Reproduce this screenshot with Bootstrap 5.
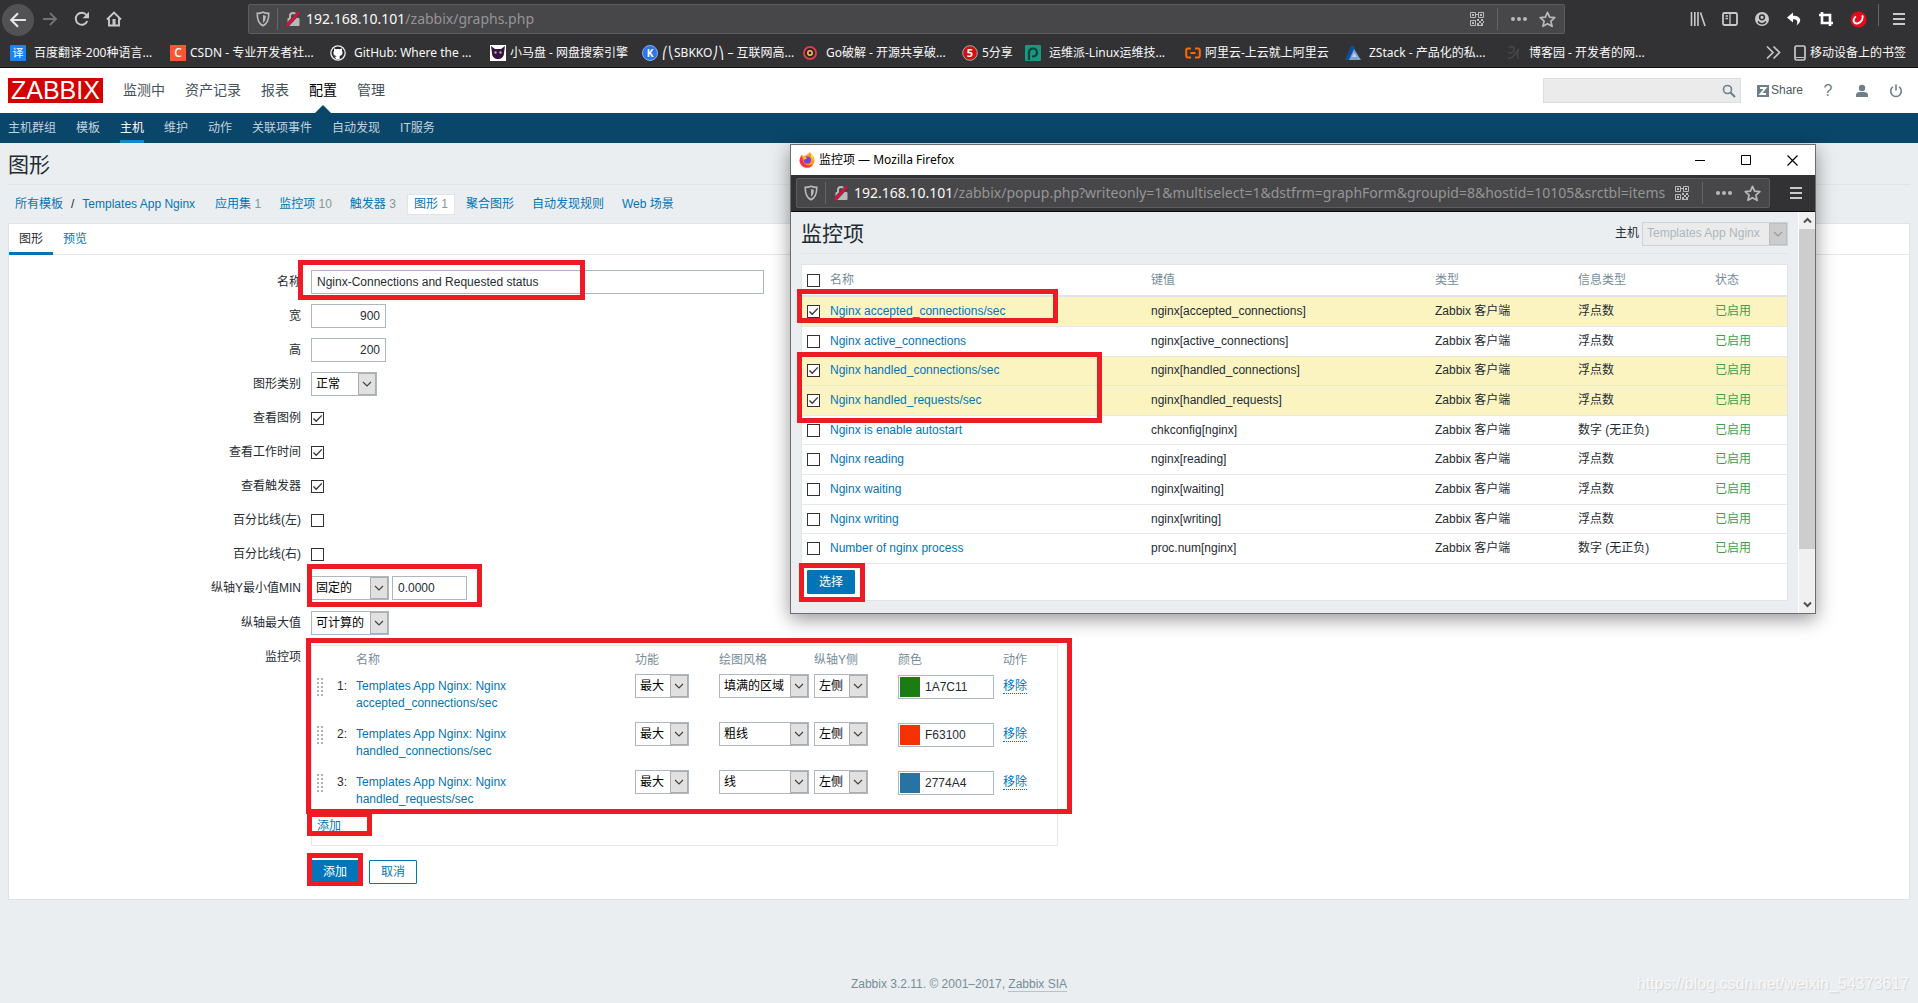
<!DOCTYPE html>
<html lang="zh-CN">
<head>
<meta charset="utf-8">
<meta name="viewport" content="width=device-width, initial-scale=1">
<title>图形</title>
<link href="https://cdn.jsdelivr.net/npm/bootstrap@5.3.0/dist/css/bootstrap.min.css" rel="stylesheet">
<style>
:root{--ui:"Noto Sans","Noto Sans CJK SC",sans-serif;--zbx:"Liberation Sans","Noto Sans CJK SC",sans-serif;--link:#0275b8;--line:#dfe4e7;--ink:#1f2c33}
body{font:12px/17px var(--zbx);color:var(--ink);background:#ebeef0;min-height:100vh}
a{color:var(--link);text-decoration:none}
svg{display:block;flex:none}
button{font-family:inherit}
/* browser chrome */
.chrome-top{background:#323234;border-bottom:1px solid #0c0c0d;color:#f9f9fa;font-family:var(--ui)}
.toolrow{height:38px;padding:4px 3px 0 2px}
.tool{background:none;border:0;padding:0;width:32px;height:30px;display:flex;align-items:center;justify-content:center;color:#c9c9ca;flex:none}
.tool.back{border-radius:50%;background:#525254;height:32px;color:#e6e6e7}
.tool.bright{color:#fff}
.urlbar{background:#474749;border:1px solid #5c5c5e;border-radius:2px;height:30px;color:#b9b9ba;min-width:0;padding:0 4px 0 6px}
.urlbar.main{margin-left:118px;margin-right:117px}
.urltext{font:14px/20px var(--ui);color:#959596;white-space:nowrap;overflow:hidden;min-width:0;margin-left:5px}
.urltext b{font-weight:400;color:#f9f9fa}
.vline{width:1px;height:22px;background:#65656b;flex:none}
.vline.lead-in{margin:0 7px 0 6px}
.bookrow{height:29px;padding-left:10px;padding-right:12px}
.bm{width:160px;color:#f9f9fa;font:12px/17px var(--ui);white-space:nowrap;gap:4px}
.bm.wide-gap{gap:8px}
.bm.mid{width:152px}
.bm.short{width:63px}
/* zabbix header */
.zhead{background:#fff;height:45px;padding:0 8px}
.zlogo{background:#d40000;color:#fff;font-size:25px;line-height:25px;height:25px;padding:0 3px}
.zlogo:hover{color:#fff}
.topmenu{gap:20px;margin-left:20px}
.topmenu a{font-size:14px;line-height:45px;color:#445259;position:relative}
.topmenu a.on{color:#000}
.topmenu a.on::after{content:"";position:absolute;left:50%;bottom:0;margin-left:-8px;border:8px solid transparent;border-top:0;border-bottom-color:#0a466a}
.submenu{background:#0a466a;height:30px;padding:0 8px;gap:20px}
.submenu a{color:#c3d2dc;line-height:30px;height:30px}
.submenu a.on{color:#fff;border-bottom:3px solid #1487cd}
.zsearch{width:198px;height:25px;background:#ebebeb;border:1px solid #dcdfe1}
.zsearch input{background:none;border:0;min-width:0;outline:0}
.share,.share:hover{color:#4c5a61;gap:2px;margin-right:8px}
.hicon{width:34px;height:25px;color:#6c7f8a}
.hicon:last-child{margin-right:-3px}
/* page */
h1{font-size:21px;font-weight:400;line-height:39px;margin:0;color:var(--ink)}
.titlebar{border-bottom:1px solid var(--line);min-height:42px;padding-top:2px}
.crumbs{padding:8px 7px;gap:18px;height:38px}
.crumbs .path{margin-right:2px}
.crumbs span{color:#87949b}
.crumbs .cur{background:#fff;border:1px solid var(--line);padding:1px 6px;margin:0 -7px}
.panel{background:#fff;border:1px solid var(--line)}
.tabs{border-bottom:1px solid #e5e8ea;height:31px}
.tabs a{padding:0 10px;line-height:31px;height:31px}
.tabs a.on{color:var(--ink);border-bottom:3px solid var(--link)}
.zform{padding:15px 0}
.frow{display:flex;min-height:24px;margin-bottom:10px}
.frow.tall{min-height:25px}
.frow.last{margin:14px 0 0}
.frow>label,.frow>.lab{width:292px;margin-right:10px;text-align:right;line-height:24px;flex:none}
.fctl{display:flex;align-items:center;position:relative;gap:3px;height:24px}
.tbox{border:1px solid #abb8bf;height:24px;padding:0 5px;color:var(--ink);background:#fff;border-radius:0}
.num{width:75px}
.long{width:453px}
.tsel{appearance:none;border:1px solid #abb8bf;border-radius:0;height:24px;padding:0 18px 0 4px;color:#000;background:#fff url("data:image/svg+xml,%3Csvg xmlns='http://www.w3.org/2000/svg' width='18' height='22'%3E%3Crect x='.5' y='.5' width='17' height='21' fill='%23e1e1e1' stroke='%23adadad'/%3E%3Cpath d='M5 9l4 4 4-4' fill='none' stroke='%23444' stroke-width='1.2'/%3E%3C/svg%3E") no-repeat right 0 center}
.tsel:disabled{opacity:1;color:#acb8be;border-color:#c9d4da;background-color:#ebebeb;background-image:url("data:image/svg+xml,%3Csvg xmlns='http://www.w3.org/2000/svg' width='18' height='22'%3E%3Crect x='.5' y='.5' width='17' height='21' fill='%23ccc' stroke='%23bfbfbf'/%3E%3Cpath d='M5 9l4 4 4-4' fill='none' stroke='%23999' stroke-width='1.2'/%3E%3C/svg%3E")}
.w54{width:54px}.w66{width:66px}.w78{width:78px}.w90{width:90px}.w146{width:146px}
.tick{appearance:none;width:13px;height:13px;border:1px solid #333;background:#fff;margin:0;display:block;flex:none}
.tick:checked{background:#fff url("data:image/svg+xml,%3Csvg xmlns='http://www.w3.org/2000/svg' width='11' height='11'%3E%3Cpath d='M1.5 5.5l2.7 2.8L9.8 2.4' fill='none' stroke='%23333' stroke-width='1.3'/%3E%3C/svg%3E") no-repeat center}
.items{border:1px solid #e5e8ea;width:747px;height:201px;padding:6px 5px 0}
.items table{table-layout:fixed;width:100%}
.items th{font-weight:400;color:#768d99;padding:0 0 5px;line-height:17px}
.items td{height:48px;vertical-align:top;padding:4px 0}
.items td.c{padding:0}
.items td.nm{padding-right:60px}
.grip{width:6px;height:18px;background:repeating-linear-gradient(#fff0 0 2px,#fff 2px 4px),linear-gradient(90deg,#a9b3b9 2px,#fff 2px 4px,#a9b3b9 4px)}
.colr{border:1px solid #abb8bf;width:96px;height:24px;margin-top:1px;padding:1px}
.colr input{border:0;width:70px;padding:0 5px;color:var(--ink);outline:0}
.swatch{width:20px;height:20px;border:0;padding:0}
.act{border-bottom:1px dotted var(--link)}
.zbtn{background:var(--link);border:1px solid var(--link);color:#fff;height:24px;width:48px;padding:0;font-size:12px;line-height:22px;border-radius:1px}
.zbtn.alt{background:#fff;color:var(--link);margin-left:7px}
.zbtn.pick{margin:6px 5px}
.foot{color:#768d99;padding-bottom:10px}
.foot a{color:#768d99;border-bottom:1px solid #b8c2c8}
.wmark{position:absolute;right:9px;bottom:8px;font-size:16px;line-height:22px;color:#f7f8f9;text-shadow:1px 1px 1px #cdd1d3}
/* red marker frames lying over the content */
.frame{position:absolute;border:5px solid #ed1c24;pointer-events:none;z-index:2}
.f-name{left:-13px;top:-10px;width:287px;height:40px}
.f-min{left:-4px;top:-12px;width:175px;height:43px}
.f-items{left:-5px;top:-7px;width:766px;height:176px}
.f-add{left:-4px;top:167px;width:65px;height:24px}
.f-submit{left:-4px;top:-7px;width:56px;height:33px}
.f-row1{left:-5px;top:24px;width:261px;height:34px}
.f-row2{left:-5px;top:87px;width:305px;height:71px}
.f-pick{left:-3px;top:298px;width:66px;height:39px}
/* popup window */
.popwin{position:absolute;left:790px;top:144px;width:1026px;height:470px;border:1px solid #6b6d6f;background:#ebeef0;box-shadow:0 5px 18px rgba(0,0,0,.42);z-index:5}
.wtitle{height:30px;background:#fff;color:#000;font:12px/30px var(--ui);padding-left:8px}
.wtitle button{width:46px;height:30px;border:0;background:none;padding:0;display:flex;align-items:center;justify-content:center}
.pchrome{background:#323234;border-bottom:1px solid #0c0c0d;height:37px;padding:3px 3px 3px 5px;color:#f9f9fa}
.pchrome .tool{margin-left:10px}
.vline.mid-bar{margin:0 9px 0 12px}
.pview{height:401px}
.pbody{padding:0 10px;min-width:0}
.hostpick{gap:3px}
.ptab{background:#fff;border:1px solid var(--line);margin-top:10px;height:337px;position:relative}
.ptab table{width:100%;table-layout:fixed;height:299px}
.ptab th{font-weight:400;color:#768d99;padding:0;height:31px;border-bottom:2px solid var(--line)}
.ptab td{padding:0;border-bottom:1px solid #e5e8ea}
.ptab td:first-child,.ptab th:first-child{padding-left:5px}
.ptab tr.sel{background:#fbf4c1}
.ok,.ok:hover{color:#429e47}
.sbar{width:17px;flex:none;background:#f0f0f0;border-left:1px solid #fff;color:#505050}
.thumb{background:#cdcdcd;height:320px}
</style>
<script src="https://cdn.jsdelivr.net/npm/bootstrap@5.3.0/dist/js/bootstrap.bundle.min.js"></script>
</head>
<body class="d-flex flex-column position-relative">
<svg width="0" height="0" class="position-absolute" aria-hidden="true">
<symbol id="shield" viewBox="0 0 16 16"><path d="M8 1.200c2 .9 4 1.200 5.800 1.200 0 5.300-.6 9.800-5.800 12.400C2.800 12.200 2.200 7.700 2.200 2.400 4 2.400 6 2.100 8 1.200z" fill="none" stroke="currentColor" stroke-width="1.600"/><path d="M8 4v8c2.200-1.700 2.800-4 2.900-7.200C9.900 4.700 9 4.400 8 4z" fill="currentColor"/></symbol>
<symbol id="unlock" viewBox="0 0 16 16"><path d="M5 7V5a3 3 0 0 1 6 0v2" fill="none" stroke="currentColor" stroke-width="2"/><rect x="2.500" y="7" width="12" height="8" rx="1" fill="currentColor"/><path d="M1.500 15L14 1.500" stroke="#474749" stroke-width="4"/><path d="M1.500 15L14 1.500" stroke="#ff0039" stroke-width="2"/></symbol>
<symbol id="qr" viewBox="0 0 16 16"><path d="M1.500 1.500h5v5h-5zM9.500 1.500h5v5h-5zM1.500 9.500h5v5h-5z" fill="none" stroke="currentColor"/><path d="M3 3h2v2H3zM11 3h2v2h-2zM3 11h2v2H3zM8 8h2v2H8zM12 8h2v2h-2zM10 10h2v2h-2zM14 10h1v2h-1zM8 12h2v3H8zM12 12h2v3h-2zM10 14h2v1h-2zM7 3h2v1H7z" fill="currentColor"/></symbol>
<symbol id="dots" viewBox="0 0 16 16"><circle cx="2" cy="8" r="2"/><circle cx="8" cy="8" r="2"/><circle cx="14" cy="8" r="2"/></symbol>
<symbol id="star" viewBox="0 0 16 16"><path d="M8 1.300l2 4.500 4.900.5-3.700 3.200 1.100 4.900L8 11.900l-4.300 2.500 1.100-4.900L1.100 6.300 6 5.800z" fill="none" stroke="currentColor" stroke-width="1.600" stroke-linejoin="round"/></symbol>
<symbol id="burger" viewBox="0 0 16 16"><path d="M2 3h12M2 8h12M2 13h12" stroke="currentColor" stroke-width="1.800"/></symbol>
</svg>

<header class="chrome-top">
<div class="toolrow d-flex align-items-start">
<button class="tool back" aria-label="后退"><svg width="18" height="18" viewBox="0 0 16 16"><path d="M15 8H2M8 2L2 8l6 6" fill="none" stroke="currentColor" stroke-width="1.900"/></svg></button>
<button class="tool" aria-label="前进"><svg width="16" height="16" viewBox="0 0 16 16"><path d="M1 8h13M8 2l6 6-6 6" fill="none" stroke="#737375" stroke-width="1.800"/></svg></button>
<button class="tool" aria-label="刷新"><svg width="16" height="16" viewBox="0 0 16 16"><path d="M13.300 10.200A6 6 0 1 1 12.500 4" fill="none" stroke="currentColor" stroke-width="1.900"/><path d="M15 .8v6.400H8.600z" fill="currentColor"/></svg></button>
<button class="tool" aria-label="主页"><svg width="16" height="16" viewBox="0 0 16 16"><path d="M1 8.500L8 1.500l7 7M3 7.500v7h10v-7" fill="none" stroke="currentColor" stroke-width="1.900"/><path d="M6.500 8h3v6h-3z" fill="currentColor"/></svg></button>
<div class="urlbar main d-flex align-items-center flex-grow-1">
<svg width="16" height="16"><use href="#shield"/></svg><i class="vline lead-in"></i><svg width="16" height="16"><use href="#unlock"/></svg>
<div class="urltext flex-grow-1"><b>192.168.10.101</b>/zabbix/graphs.php</div>
<svg width="16" height="16"><use href="#qr"/></svg><i class="vline mid-bar"></i>
<svg class="mx-1" width="16" height="16" fill="currentColor"><use href="#dots"/></svg><svg class="ms-2 me-1" width="17" height="17"><use href="#star"/></svg>
</div>
<button class="tool" aria-label="书库"><svg width="16" height="16" viewBox="0 0 16 16"><path d="M1.500 1v14M4.800 1v14M8 1v14M10.500 1.500L15 15" stroke="currentColor" stroke-width="1.600"/></svg></button>
<button class="tool" aria-label="侧栏"><svg width="16" height="16" viewBox="0 0 16 16"><rect x="1" y="2" width="14" height="12" rx="1.500" fill="none" stroke="currentColor" stroke-width="1.800"/><path d="M8 2v12M3.500 5h2.500M3.500 7.500h2.500" stroke="currentColor" stroke-width="1.300"/></svg></button>
<button class="tool" aria-label="账户"><svg width="16" height="16" viewBox="0 0 16 16"><circle cx="8" cy="8" r="7" fill="currentColor"/><circle cx="8" cy="6.300" r="2.400" fill="none" stroke="#323234" stroke-width="1.500"/><path d="M4 10.500c2 3 6 3 8 0" fill="none" stroke="#323234" stroke-width="1.600"/></svg></button>
<button class="tool bright" aria-label="撤销"><svg width="16" height="16" viewBox="0 0 16 16"><path d="M7 1.500L1 6.500l6 5V8.300c4.500-.3 5 2.200 3.500 6.200C17 10 14.500 4.500 7 4.700z" fill="currentColor"/></svg></button>
<button class="tool bright" aria-label="截图"><svg width="16" height="16" viewBox="0 0 16 16"><path d="M4 1v11h11M1 4h11v11" fill="none" stroke="currentColor" stroke-width="2.600"/></svg></button>
<button class="tool" aria-label="扩展"><svg width="17" height="17" viewBox="0 0 16 16"><circle cx="8" cy="8" r="7.600" fill="#e60a1c"/><path d="M5.500 5C1.500 9 4 12.500 7.500 11.500s5.500-5 4-7.500" fill="none" stroke="#fff" stroke-width="1.800"/></svg></button>
<i class="vline ms-1"></i>
<button class="tool ms-1" aria-label="菜单"><svg width="16" height="16"><use href="#burger"/></svg></button>
</div>
<nav class="bookrow d-flex align-items-center">
<a class="bm wide-gap d-flex align-items-center" href="#"><svg width="16" height="16"><rect width="16" height="16" rx="1" fill="#1a84f5"/><text x="8" y="12" text-anchor="middle" font-size="11" fill="#fff" font-family="Noto Sans CJK SC">译</text></svg>百度翻译-200种语言...</a>
<a class="bm d-flex align-items-center" href="#"><svg width="16" height="16"><rect width="16" height="16" fill="#fc5531"/><text x="8" y="12" text-anchor="middle" font-size="12" font-weight="600" fill="#fff" font-family="Open Sans">C</text></svg>CSDN - 专业开发者社...</a>
<a class="bm wide-gap d-flex align-items-center" href="#"><svg width="16" height="16" viewBox="0 0 16 16"><circle cx="8" cy="8" r="7.800" fill="#eee"/><circle cx="8" cy="8" r="6.500" fill="#26262a"/><path d="M6.300 14.200v-2.500C3 12 4 10 2.800 9.500M4 5.800L4 3.300l2 1c1.300-.3 2.700-.3 4 0l2-1v2.500c1.500 3-.3 5-2.500 5.200.3.500.3 1 .3 3.200l-3.500 0V11C4 10.800 2.500 8.800 4 5.800z" fill="#fff"/></svg>GitHub: Where the ...</a>
<a class="bm mid d-flex align-items-center" href="#"><svg width="16" height="16" viewBox="0 0 16 16"><rect width="16" height="16" fill="#fff"/><path d="M1 1l4 3h6l4-3-1 7c0 4-3 6-6 6s-6-2-6-6z" fill="#33163f"/><circle cx="5.500" cy="7.500" r="1.200" fill="#c9a"/><circle cx="10.500" cy="7.500" r="1.200" fill="#c9a"/></svg>小马盘 - 网盘搜索引擎</a>
<a class="bm d-flex align-items-center" href="#"><svg width="16" height="16"><circle cx="8" cy="8" r="7.500" fill="#2d76ea" stroke="#7fb1ff"/><text x="8" y="12" text-anchor="middle" font-size="10" font-weight="700" fill="#fff" font-family="Noto Sans">K</text></svg>⎛⎝SBKKO⎠⎞ – 互联网高...</a>
<a class="bm wide-gap d-flex align-items-center" href="#"><svg width="16" height="16"><circle cx="8" cy="8" r="6" fill="#2a2426" stroke="#e63946" stroke-width="2"/><circle cx="8" cy="8" r="2.200" fill="none" stroke="#f4c95d" stroke-width="1.500"/></svg>Go破解 - 开源共享破...</a>
<a class="bm short d-flex align-items-center" href="#"><svg width="16" height="16"><circle cx="8" cy="8" r="7.300" fill="#d0100f" stroke="#aaa"/><text x="8" y="12" text-anchor="middle" font-size="11" font-weight="700" fill="#fff" font-family="Noto Sans">5</text></svg>5分享</a>
<a class="bm wide-gap d-flex align-items-center" href="#"><svg width="16" height="16"><rect width="16" height="16" rx="1" fill="#149a80"/><path d="M4 15V7a4 4 0 1 1 4 4.500H7" fill="none" stroke="#14403a" stroke-width="2.200"/></svg>运维派-Linux运维技...</a>
<a class="bm d-flex align-items-center" href="#"><svg width="16" height="16"><path d="M6 3.500H3Q1.200 3.500 1.200 5.500v5Q1.200 12.500 3 12.500h3M10 3.500h3q1.800 0 1.800 2v5q0 2-1.800 2h-3M5.500 8h5" fill="none" stroke="#ff6a00" stroke-width="2"/></svg>阿里云-上云就上阿里云</a>
<a class="bm wide-gap d-flex align-items-center" href="#"><svg width="16" height="16"><path d="M6 1h3l1 3-4 11H0z" fill="#0d4f9e"/><path d="M9 4l7 11H4z" fill="#7fa3d8"/><path d="M9 8l3 4H7z" fill="#fff" opacity=".5"/></svg>ZStack - 产品化的私...</a>
<a class="bm wide-gap d-flex align-items-center" href="#"><svg width="16" height="16"><path d="M4 3c2-3 6-1 5 2s-5 4-6 2M3 13c5 2 8-6 10-8-1 4-1 7 1 9" fill="none" stroke="#48484a" stroke-width="1.400"/></svg>博客园 - 开发者的网...</a>
<button class="tool ms-auto me-1" aria-label="更多"><svg width="15" height="15" viewBox="0 0 15 15"><path d="M1 1.500l6 6-6 6M7.500 1.500l6 6-6 6" fill="none" stroke="currentColor" stroke-width="1.700"/></svg></button>
<a class="bm w-auto d-flex align-items-center" href="#"><svg width="12" height="16"><rect x="1" y="1" width="10" height="14" rx="1.500" fill="none" stroke="#c9c9ca" stroke-width="1.700"/><path d="M2 12.500h8" stroke="#c9c9ca"/></svg>移动设备上的书签</a>
</nav>
</header>

<div class="zhead d-flex align-items-center">
<a class="zlogo" href="#">ZABBIX</a>
<nav class="topmenu d-flex me-auto"><a href="#">监测中</a><a href="#">资产记录</a><a href="#">报表</a><a class="on" href="#">配置</a><a href="#">管理</a></nav>
<div class="zsearch d-flex align-items-center"><input class="flex-grow-1" aria-label="搜索"><svg class="me-1" width="14" height="14" viewBox="0 0 14 14"><circle cx="5.500" cy="5.500" r="4" fill="none" stroke="#6c7f8a" stroke-width="1.600"/><path d="M8.500 8.500l4.500 4.500" stroke="#6c7f8a" stroke-width="2"/></svg></div>
<a class="share d-flex align-items-center ms-3" href="#"><svg width="12" height="12"><rect width="12" height="12" fill="#6c7f8a"/><path d="M3 3h5.500L3.500 9H9" fill="none" stroke="#fff" stroke-width="1.800"/></svg>Share</a>
<a class="hicon d-flex align-items-center justify-content-center fs-6" href="#">?</a>
<a class="hicon d-flex align-items-center justify-content-center" href="#" aria-label="用户"><svg width="14" height="14" fill="currentColor"><circle cx="7" cy="4" r="3.200"/><path d="M1 13V11q0-3 4-3h4q4 0 4 3v2z"/></svg></a>
<a class="hicon d-flex align-items-center justify-content-center" href="#" aria-label="退出"><svg width="14" height="14"><path d="M4 2.800a5.300 5.300 0 1 0 6 0M7 .5v6" fill="none" stroke="currentColor" stroke-width="1.600"/></svg></a>
</div>
<nav class="submenu d-flex"><a href="#">主机群组</a><a href="#">模板</a><a class="on" href="#">主机</a><a href="#">维护</a><a href="#">动作</a><a href="#">关联项事件</a><a href="#">自动发现</a><a href="#">IT服务</a></nav>

<main class="px-2">
<div class="titlebar"><h1>图形</h1></div>
<div class="crumbs d-flex align-items-center">
<div class="path"><a href="#">所有模板</a><span class="text-dark px-2">/</span><a href="#">Templates App Nginx</a></div>
<div><a href="#">应用集</a> <span>1</span></div><div><a href="#">监控项</a> <span>10</span></div><div><a href="#">触发器</a> <span>3</span></div>
<div class="cur"><a href="#">图形</a> <span>1</span></div>
<a href="#">聚合图形</a><a href="#">自动发现规则</a><a href="#">Web 场景</a>
</div>
<section class="panel">
<nav class="tabs d-flex"><a class="on" href="#">图形</a><a href="#">预览</a></nav>
<form class="zform">
<div class="frow"><label for="gname">名称</label><div class="fctl"><input id="gname" class="tbox long" value="Nginx-Connections and Requested status"><i class="frame f-name"></i></div></div>
<div class="frow"><label for="gw">宽</label><div class="fctl"><input id="gw" class="tbox num text-end" value="900"></div></div>
<div class="frow"><label for="gh">高</label><div class="fctl"><input id="gh" class="tbox num text-end" value="200"></div></div>
<div class="frow"><label for="gt">图形类别</label><div class="fctl"><select id="gt" class="tsel w66"><option>正常</option></select></div></div>
<div class="frow"><label for="c1">查看图例</label><div class="fctl"><input type="checkbox" id="c1" class="tick" checked></div></div>
<div class="frow"><label for="c2">查看工作时间</label><div class="fctl"><input type="checkbox" id="c2" class="tick" checked></div></div>
<div class="frow"><label for="c3">查看触发器</label><div class="fctl"><input type="checkbox" id="c3" class="tick" checked></div></div>
<div class="frow"><label for="c4">百分比线(左)</label><div class="fctl"><input type="checkbox" id="c4" class="tick"></div></div>
<div class="frow"><label for="c5">百分比线(右)</label><div class="fctl"><input type="checkbox" id="c5" class="tick"></div></div>
<div class="frow tall"><label for="ymin">纵轴Y最小值MIN</label><div class="fctl"><select id="ymin" class="tsel w78"><option>固定的</option></select><input class="tbox num" aria-label="最小值" value="0.0000"><i class="frame f-min"></i></div></div>
<div class="frow"><label for="ymax">纵轴最大值</label><div class="fctl"><select id="ymax" class="tsel w78"><option>可计算的</option></select></div></div>
<div class="frow"><div class="lab">监控项</div>
<div class="position-relative">
<div class="items">
<table>
<colgroup><col style="width:20px"><col style="width:19px"><col style="width:279px"><col style="width:84px"><col style="width:95px"><col style="width:84px"><col style="width:105px"><col></colgroup>
<thead><tr><th></th><th></th><th>名称</th><th>功能</th><th>绘图风格</th><th>纵轴Y侧</th><th>颜色</th><th>动作</th></tr></thead>
<tbody>
<tr><td><div class="grip"></div></td><td>1:</td><td class="nm"><a href="#">Templates App Nginx: Nginx accepted_connections/sec</a></td><td class="c"><select class="tsel w54" aria-label="功能"><option>最大</option></select></td><td class="c"><select class="tsel w90" aria-label="绘图风格"><option>填满的区域</option></select></td><td class="c"><select class="tsel w54" aria-label="纵轴Y侧"><option>左侧</option></select></td><td class="c"><div class="colr d-flex"><button type="button" class="swatch" style="background:#1A7C11" aria-label="选色"></button><input aria-label="颜色" value="1A7C11"></div></td><td><a class="act" href="#">移除</a></td></tr>
<tr><td><div class="grip"></div></td><td>2:</td><td class="nm"><a href="#">Templates App Nginx: Nginx handled_connections/sec</a></td><td class="c"><select class="tsel w54" aria-label="功能"><option>最大</option></select></td><td class="c"><select class="tsel w90" aria-label="绘图风格"><option>粗线</option></select></td><td class="c"><select class="tsel w54" aria-label="纵轴Y侧"><option>左侧</option></select></td><td class="c"><div class="colr d-flex"><button type="button" class="swatch" style="background:#F63100" aria-label="选色"></button><input aria-label="颜色" value="F63100"></div></td><td><a class="act" href="#">移除</a></td></tr>
<tr><td><div class="grip"></div></td><td>3:</td><td class="nm"><a href="#">Templates App Nginx: Nginx handled_requests/sec</a></td><td class="c"><select class="tsel w54" aria-label="功能"><option>最大</option></select></td><td class="c"><select class="tsel w90" aria-label="绘图风格"><option>线</option></select></td><td class="c"><select class="tsel w54" aria-label="纵轴Y侧"><option>左侧</option></select></td><td class="c"><div class="colr d-flex"><button type="button" class="swatch" style="background:#2774A4" aria-label="选色"></button><input aria-label="颜色" value="2774A4"></div></td><td><a class="act" href="#">移除</a></td></tr>
</tbody></table>
<a href="#">添加</a>
</div>
<i class="frame f-items"></i><i class="frame f-add"></i>
</div></div>
<div class="frow last"><div class="lab"></div><div class="fctl"><button type="button" class="zbtn">添加</button><button type="button" class="zbtn alt">取消</button><i class="frame f-submit"></i></div></div>
</form>
</section>
</main>
<footer class="foot text-center mt-auto">Zabbix 3.2.11. © 2001–2017, <a href="#">Zabbix SIA</a></footer>
<div class="wmark">https://blog.csdn.net/weixin_54373617</div>

<section class="popwin">
<div class="wtitle d-flex align-items-center"><svg class="me-1" width="16" height="16" viewBox="0 0 16 16"><path d="M11 0c.5 2 4.500 4 4.500 8.500A7.500 7.500 0 0 1 .5 8.500C.5 6 1.500 4 3 2.500L4 4.500C6 3.500 9 3 11 0z" fill="#ff9a1f"/><path d="M3 3.500C1 6 .5 8 .8 10a7.500 7.500 0 0 0 13.500 2.200C10 15 5 13 4 9z" fill="#f5304e"/><circle cx="8.300" cy="8.200" r="3.600" fill="#7a3fd6"/><path d="M3.500 5c2-.5 4 0 4.800 1.500-1.300 0-2 .5-2.800 1.500z" fill="#ffbd2e"/><path d="M12 1.500c1.500 1.500 3 4 2.500 7.500-.5-2-1.500-3-2.500-4z" fill="#ffe14a"/></svg><span class="me-auto">监控项 — Mozilla Firefox</span>
<button aria-label="最小化"><svg width="10" height="10"><path d="M0 5.500h10" stroke="#000"/></svg></button><button aria-label="最大化"><svg width="10" height="10"><path d="M.5.5h9v9h-9z" fill="none" stroke="#000"/></svg></button><button aria-label="关闭"><svg width="11" height="11"><path d="M.5.5l10 10M10.500.5l-10 10" stroke="#000" stroke-width="1.200"/></svg></button></div>
<div class="pchrome d-flex align-items-center">
<div class="urlbar d-flex align-items-center flex-grow-1"><svg width="16" height="16"><use href="#shield"/></svg><i class="vline lead-in"></i><svg width="16" height="16"><use href="#unlock"/></svg>
<div class="urltext flex-grow-1"><b>192.168.10.101</b>/zabbix/popup.php?writeonly=1&amp;multiselect=1&amp;dstfrm=graphForm&amp;groupid=8&amp;hostid=10105&amp;srctbl=items</div>
<svg class="ms-2" width="16" height="16"><use href="#qr"/></svg><i class="vline mid-bar"></i><svg class="mx-1" width="16" height="16" fill="currentColor"><use href="#dots"/></svg><svg class="ms-2 me-1" width="17" height="17"><use href="#star"/></svg></div>
<button class="tool" aria-label="菜单"><svg width="16" height="16"><use href="#burger"/></svg></button>
</div>
<div class="pview d-flex">
<div class="pbody flex-grow-1">
<div class="titlebar d-flex align-items-center justify-content-between"><h1>监控项</h1><div class="hostpick d-flex align-items-center"><label for="host">主机</label><select id="host" class="tsel w146" disabled><option>Templates App Nginx</option></select></div></div>
<div class="ptab">
<table>
<colgroup><col style="width:28px"><col style="width:321px"><col style="width:284px"><col style="width:143px"><col style="width:137px"><col></colgroup>
<thead><tr><th><input type="checkbox" class="tick" aria-label="全选"></th><th>名称</th><th>键值</th><th>类型</th><th>信息类型</th><th>状态</th></tr></thead>
<tbody>
<tr class="sel"><td><input type="checkbox" class="tick" aria-label="选择" checked></td><td><a href="#">Nginx accepted_connections/sec</a></td><td>nginx[accepted_connections]</td><td>Zabbix 客户端</td><td>浮点数</td><td><span class="ok">已启用</span></td></tr>
<tr><td><input type="checkbox" class="tick" aria-label="选择"></td><td><a href="#">Nginx active_connections</a></td><td>nginx[active_connections]</td><td>Zabbix 客户端</td><td>浮点数</td><td><span class="ok">已启用</span></td></tr>
<tr class="sel"><td><input type="checkbox" class="tick" aria-label="选择" checked></td><td><a href="#">Nginx handled_connections/sec</a></td><td>nginx[handled_connections]</td><td>Zabbix 客户端</td><td>浮点数</td><td><span class="ok">已启用</span></td></tr>
<tr class="sel"><td><input type="checkbox" class="tick" aria-label="选择" checked></td><td><a href="#">Nginx handled_requests/sec</a></td><td>nginx[handled_requests]</td><td>Zabbix 客户端</td><td>浮点数</td><td><span class="ok">已启用</span></td></tr>
<tr><td><input type="checkbox" class="tick" aria-label="选择"></td><td><a href="#">Nginx is enable autostart</a></td><td>chkconfig[nginx]</td><td>Zabbix 客户端</td><td>数字 (无正负)</td><td><span class="ok">已启用</span></td></tr>
<tr><td><input type="checkbox" class="tick" aria-label="选择"></td><td><a href="#">Nginx reading</a></td><td>nginx[reading]</td><td>Zabbix 客户端</td><td>浮点数</td><td><span class="ok">已启用</span></td></tr>
<tr><td><input type="checkbox" class="tick" aria-label="选择"></td><td><a href="#">Nginx waiting</a></td><td>nginx[waiting]</td><td>Zabbix 客户端</td><td>浮点数</td><td><span class="ok">已启用</span></td></tr>
<tr><td><input type="checkbox" class="tick" aria-label="选择"></td><td><a href="#">Nginx writing</a></td><td>nginx[writing]</td><td>Zabbix 客户端</td><td>浮点数</td><td><span class="ok">已启用</span></td></tr>
<tr><td><input type="checkbox" class="tick" aria-label="选择"></td><td><a href="#">Number of nginx process</a></td><td>proc.num[nginx]</td><td>Zabbix 客户端</td><td>数字 (无正负)</td><td><span class="ok">已启用</span></td></tr>
</tbody></table>
<button class="zbtn pick">选择</button>
<i class="frame f-row1"></i><i class="frame f-row2"></i><i class="frame f-pick"></i>
</div>
</div>
<div class="sbar d-flex flex-column"><svg class="mx-auto my-1" width="9" height="9"><path d="M1 6.500L4.500 3 8 6.500" fill="none" stroke="currentColor" stroke-width="2"/></svg><div class="thumb"></div><svg class="mx-auto mt-auto mb-1" width="9" height="9"><path d="M1 2.500L4.500 6 8 2.500" fill="none" stroke="currentColor" stroke-width="2"/></svg></div>
</div>
</section>
</body>
</html>
